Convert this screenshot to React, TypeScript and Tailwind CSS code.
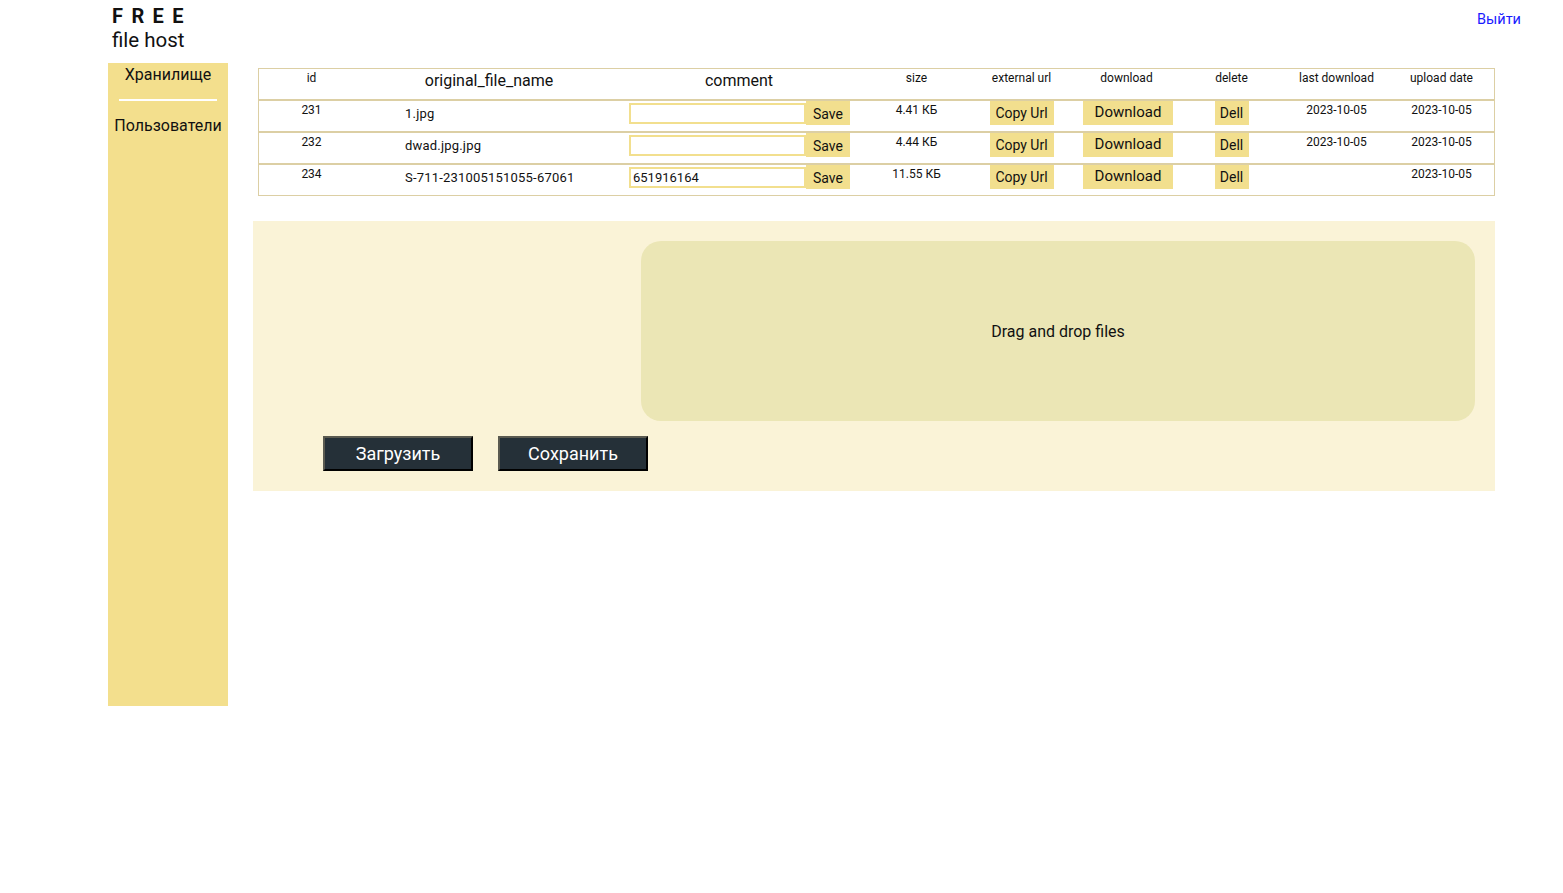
const cols = "grid grid-cols-[105px_250px_250px_105px_105px_105px_105px_105px_105px]";

type Row = { id: number; name: string; comment: string; size: string; last: string; upload: string };

const rows: Row[] = [
  { id: 231, name: "1.jpg", comment: "", size: "4.41 КБ", last: "2023-10-05", upload: "2023-10-05" },
  { id: 232, name: "dwad.jpg.jpg", comment: "", size: "4.44 КБ", last: "2023-10-05", upload: "2023-10-05" },
  { id: 234, name: "S-711-231005151055-67061", comment: "651916164", size: "11.55 КБ", last: "", upload: "2023-10-05" },
];

function FileRow({ r }: { r: Row }) {
  return (
    <div className={`${cols} h-[32px] border-t-2 border-[#dccfa4] text-[12px] text-[#111]`}>
      <div className="text-center">{r.id}</div>
      <div className="pl-[41px] pt-[3px] text-[13px] tracking-[0.2px]">{r.name}</div>
      <div className="flex pl-[15px]">
        <input
          defaultValue={r.comment}
          className="w-[177px] h-[21px] mt-[2px] border-2 border-[#f2df8e] px-[2px] text-[13px] outline-none bg-white"
        />
        <button className="w-[44px] h-[24px] bg-[#f2df8e] text-[14px] pt-[2px]">Save</button>
      </div>
      <div className="text-center">{r.size}</div>
      <div className="flex justify-center">
        <button className="w-[64px] h-[24px] bg-[#f2df8e] text-[14px] pt-[1px]">Copy Url</button>
      </div>
      <div className="flex justify-center pl-[3px]">
        <button className="w-[90px] h-[24px] bg-[#f2df8e] text-[15px] leading-[20px] pb-[3px]">Download</button>
      </div>
      <div className="flex justify-center">
        <button className="w-[34px] h-[24px] bg-[#f2df8e] text-[14px] pt-[1px]">Dell</button>
      </div>
      <div className="text-center">{r.last}</div>
      <div className="text-center">{r.upload}</div>
    </div>
  );
}

export default function App() {
  return (
    <div className="min-h-screen bg-white font-['Roboto',sans-serif] text-[#111]">
      <div className="relative pl-[112px] pt-[4px] h-[63px]">
        <div className="text-[20px] font-bold tracking-[0.42em] leading-[24px]">FREE</div>
        <div className="text-[20.5px] leading-[24px]">file host</div>
        <a href="#" className="absolute right-[42px] top-[9px] text-[14.5px] text-[#1a1aff]">Выйти</a>
      </div>
      <div className="flex pl-[108px]">
        <div className="w-[120px] h-[643px] bg-[#f3df8d] flex flex-col items-center text-[16px]">
          <div className="pt-[2px] leading-[20px]">Хранилище</div>
          <div className="w-[98px] h-[2px] bg-white mt-[14px]" />
          <div className="mt-[15px] leading-[20px]">Пользователи</div>
        </div>
        <div className="flex flex-col">
          <div className="ml-[30px] mt-[5px] w-[1237px] border border-[#dccfa4]">
            <div className={`${cols} h-[30px] text-[12px]`}>
              <div className="text-center">id</div>
              <div className="text-center text-[16px]">original_file_name</div>
              <div className="text-center text-[16px]">comment</div>
              <div className="text-center">size</div>
              <div className="text-center">external url</div>
              <div className="text-center">download</div>
              <div className="text-center">delete</div>
              <div className="text-center">last download</div>
              <div className="text-center">upload date</div>
            </div>
            {rows.map((r) => (
              <FileRow key={r.id} r={r} />
            ))}
          </div>
          <div className="ml-[25px] mt-[25px] w-[1242px] bg-[#faf3d7] pt-[20px] pb-[20px]">
            <div className="flex justify-end pr-[20px]">
              <div className="w-[834px] h-[180px] rounded-[20px] bg-[#ebe6b5] flex items-center justify-center text-[16px] pt-[2px]">
                Drag and drop files
              </div>
            </div>
            <div className="flex gap-[25px] pl-[70px] mt-[15px]">
              <button className="w-[150px] h-[35px] bg-[#253038] text-white text-[18px] border-2 border-t-[#5a5a50] border-l-[#5a5a50] border-r-black border-b-black">
                Загрузить
              </button>
              <button className="w-[150px] h-[35px] bg-[#253038] text-white text-[18px] border-2 border-t-[#5a5a50] border-l-[#5a5a50] border-r-black border-b-black">
                Сохранить
              </button>
            </div>
          </div>
        </div>
      </div>
    </div>
  );
}
